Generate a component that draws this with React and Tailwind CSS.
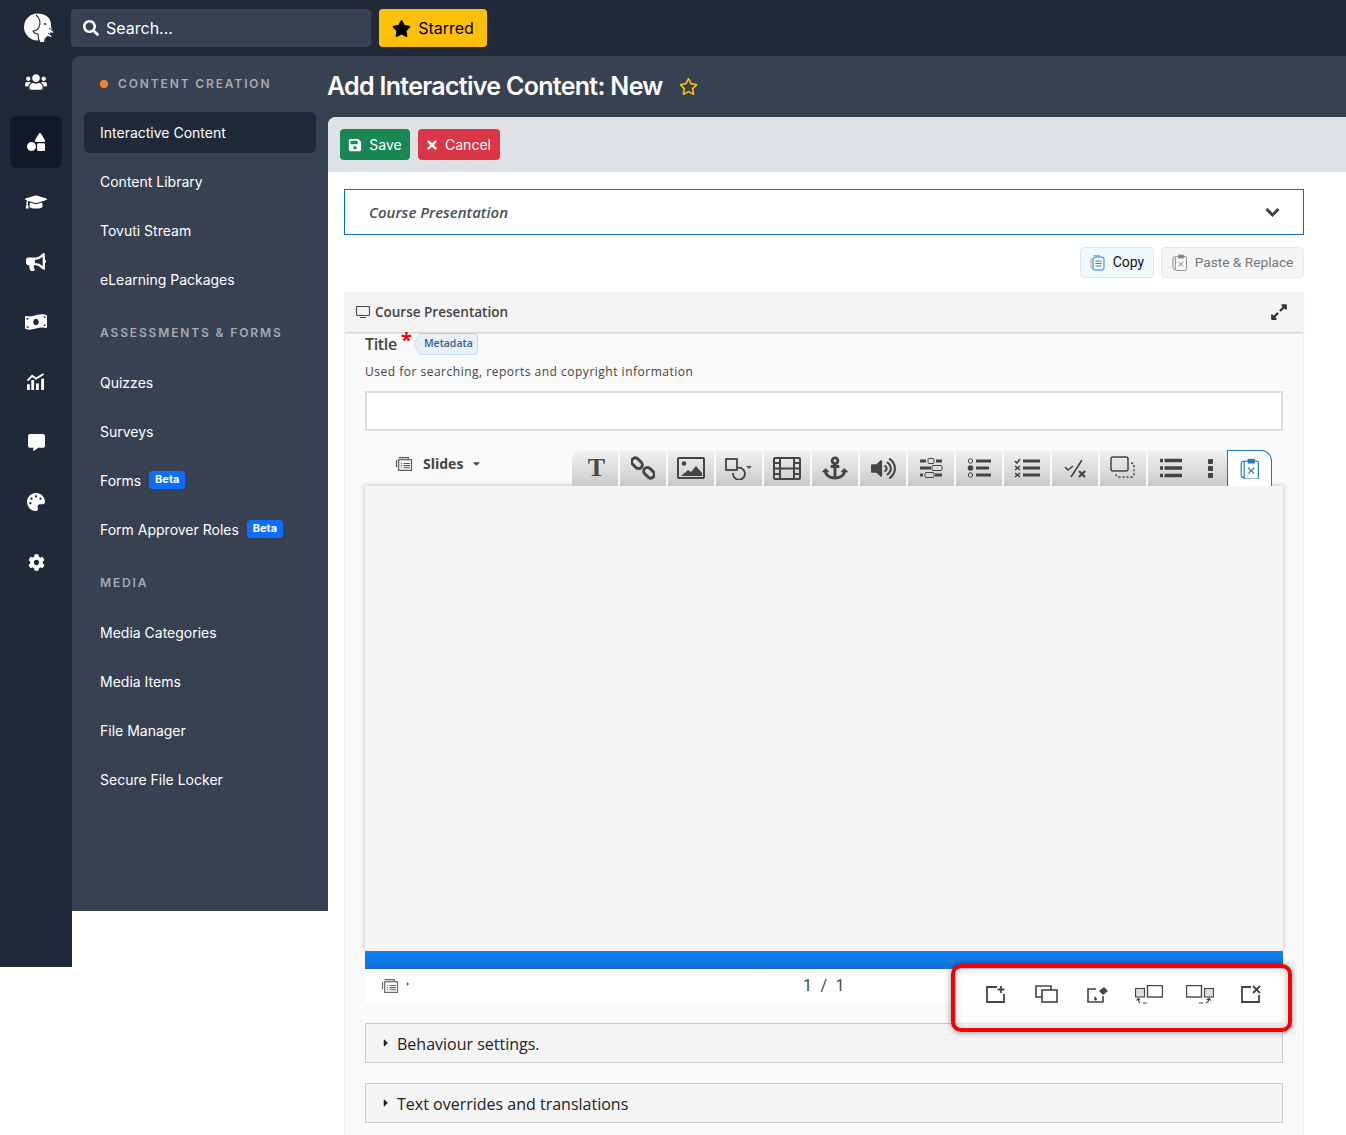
import React from 'react';
import {
  FaUsers, FaShapes, FaGraduationCap, FaBullhorn, FaMoneyBillWave, FaCommentAlt, FaPalette, FaCog,
  FaSearch, FaStar, FaRegStar, FaSave, FaTimes, FaChevronDown, FaExpandAlt, FaAnchor, FaVolumeUp, FaCaretDown, FaCaretRight,
} from 'react-icons/fa';

const ElephantLogo = () => (
  <svg width="32" height="30" viewBox="0 0 32 30">
    <circle cx="13.5" cy="14" r="13.5" fill="#fff" />
    <path d="M16 1c7 0 11 5 11 11 0 3 1 5 3 7-2 1-3 1-4 0 0 2 1 4 2 5-3 0-5-2-6-5l-2 10h-4l1-10-3-3c3-1 5-5 4-9-.4-2-1-4-2-6z" fill="#fff" />
    <path d="M12 2c4 3 5 8 3 12-1 2-3 4-6 4 1 2 3 3 5 3l1 8" fill="none" stroke="#212a39" strokeWidth="1.1" />
    <path d="M24 20l4 3M25 15l5 4" stroke="#212a39" strokeWidth="1" />
    <circle cx="21" cy="11" r="1" fill="#212a39" />
  </svg>
);

const ChartIcon = () => (
  <svg width="20" height="17" viewBox="0 0 20 18" fill="#fff" className="-mt-[2px]">
    <path d="M1 8l5-5 4 3 8-5" fill="none" stroke="#fff" strokeWidth="2" />
    <rect x="0.5" y="12" width="3" height="6" />
    <rect x="5" y="7.5" width="3" height="10.5" />
    <rect x="10" y="11" width="3" height="7" />
    <rect x="15.5" y="6" width="3" height="12" />
  </svg>
);

const railIcons = [
  <FaUsers size={22} />,
  <FaShapes size={18} />,
  <FaGraduationCap size={22} />,
  <FaBullhorn size={20} />,
  <FaMoneyBillWave size={22} />,
  <ChartIcon />,
  <FaCommentAlt size={17} />,
  <FaPalette size={18} />,
  <FaCog size={17} />,
];

const Ico = ({ w = 28, h = 26, vb, children, color = '#444' }) => (
  <svg width={w} height={h} viewBox={vb || `0 0 ${w} ${h}`} fill="none" stroke={color} strokeWidth="2">
    {children}
  </svg>
);

const toolIcons = [
  <span className="font-['Liberation_Serif',serif] font-bold text-[26px] leading-none text-[#4a4a4a] ml-[3px]">T</span>,
  <Ico w={24} h={24}>
    <rect x="0" y="3.5" width="12" height="7.5" rx="3.7" transform="rotate(45 6 7.2)" strokeWidth="3" />
    <rect x="12" y="13" width="12" height="7.5" rx="3.7" transform="rotate(45 18 16.8)" strokeWidth="3" />
  </Ico>,
  <Ico w={28} h={24}>
    <rect x="1" y="2" width="26" height="20" rx="1" />
    <circle cx="7" cy="7.5" r="2.3" fill="#444" stroke="none" />
    <path d="M4 20l7-6 3 2 5-6 6 7v3z" fill="#444" stroke="none" />
  </Ico>,
  <Ico w={28} h={24}>
    <rect x="1" y="3" width="11" height="11" strokeWidth="1.8" />
    <path d="M12 12a6 6 0 1 1-4 5" strokeWidth="1.8" />
    <path d="M21 10h6l-3 3z" fill="#555" stroke="none" />
  </Ico>,
  <Ico w={28} h={24}>
    <rect x="1" y="2" width="26" height="21" rx="1" />
    <path d="M7 2v21M21 2v21M7 12.5h14M1 7h6M1 12.5h6M1 18h6M21 7h6M21 12.5h6M21 18h6" />
  </Ico>,
  <FaAnchor size={26} color="#444" />,
  <FaVolumeUp size={25} color="#444" />,
  <Ico w={24} h={22} color="#444">
    <g strokeWidth="3">
      <path d="M1 4h6M17 4h6M1 11h11M1 18h3M16 18h7" />
    </g>
    <g strokeWidth="1">
      <rect x="9" y="1.5" width="6" height="5" rx="1" />
      <rect x="13" y="8.5" width="10" height="5" rx="1" />
      <rect x="6" y="15.5" width="9" height="5" rx="1" />
    </g>
  </Ico>,
  <Ico w={24} h={22}>
    <circle cx="3.5" cy="4" r="2.2" strokeWidth="1" />
    <circle cx="3.5" cy="11" r="2.8" fill="#444" stroke="none" />
    <circle cx="3.5" cy="18" r="2.2" strokeWidth="1" />
    <path d="M9 4h15M9 11h13M9 18h15" strokeWidth="3" />
  </Ico>,
  <Ico w={26} h={20}>
    <path d="M1 3l2 2 3-4" strokeWidth="1.6" />
    <path d="M1 8l5 4M6 8l-5 4M1 15l5 4M6 15l-5 4" strokeWidth="1.6" />
    <path d="M9 3h17M9 10h17M9 17h17" strokeWidth="3" />
  </Ico>,
  <Ico w={22} h={20}>
    <path d="M1 9l3 3 5-4M18 2L7 19" strokeWidth="1.6" />
    <path d="M15 13l6 6M21 13l-6 6" strokeWidth="2.2" />
  </Ico>,
  <Ico w={26} h={24}>
    <rect x="1" y="1" width="17" height="14" rx="2" strokeWidth="1.5" />
    <path d="M21 7c2 0 3 1 3 3v8c0 2-1 3-3 3H9c-2 0-3-1-3-3" strokeWidth="1.5" strokeDasharray="2 2" />
  </Ico>,
  <Ico w={22} h={20}>
    <path d="M0 2.5h3M4.5 2.5h17.5M0 10h3M4.5 10h17.5M0 17.5h3M4.5 17.5h17.5" strokeWidth="3.4" />
  </Ico>,
];

// clipboard with x, used for paste
const ClipboardX = ({ color = '#888', size = 16 }) => (
  <svg width={size} height={size * 1.15} viewBox="0 0 16 18" fill="none" stroke={color} strokeWidth="1">
    <path d="M3.5 2.5C2 2.5 1 3.5 1 5v9c0 1.5 1 2.5 2.5 2.5" />
    <rect x="3.5" y="2.5" width="12" height="15" rx="1.5" />
    <rect x="7" y="1" width="5" height="3" fill={color} />
    <path d="M7 8l5 5M12 8l-5 5" />
  </svg>
);

const CopyIcon = () => (
  <svg width="15" height="17" viewBox="0 0 15 17" fill="none" strokeWidth="1">
    <path d="M3 1.5h7M1 4v9c0 1 1 2 2 2" stroke="#d9a0a0" />
    <rect x="3" y="3" width="11" height="13" rx="2" stroke="#2b7cc0" />
    <path d="M5.5 7h6M5.5 9.5h6M5.5 12h6" stroke="#2b7cc0" />
  </svg>
);

const SlidesIcon = ({ color = '#555' }) => (
  <svg width="16" height="14" viewBox="0 0 15 13" fill="none" stroke={color} strokeWidth="1.1">
    <path d="M2.5 .5h9v2M.5 2.5v7" />
    <rect x="2.5" y="2.5" width="12" height="10" fill="#fff" />
    <path d="M4.5 6h1M7 6h6M4.5 8h1M7 8h6M4.5 10h1M7 10h6" />
  </svg>
);

const slideActions = [
  <svg width="20" height="18" viewBox="0 0 20 18" fill="none" stroke="#444" strokeWidth="1.8">
    <path d="M11 2H1v15h17V9M15 1v7M11.5 4.5h7" />
  </svg>,
  <svg width="24" height="18" viewBox="0 0 24 18" fill="none" stroke="#444" strokeWidth="1.6">
    <path d="M7 12H1V1h15v4" />
    <rect x="7" y="5" width="15" height="12" />
  </svg>,
  <svg width="22" height="18" viewBox="0 0 22 18" fill="none" stroke="#444" strokeWidth="1.6">
    <path d="M9 4H1v13h15V11" />
    <path d="M12 6l5-4 4 4-5 4z" fill="#444" stroke="none" />
    <path d="M8 11c1 2 2 2 2 3a1.5 1.5 0 0 1-3 0c0-1 1-2 1-3z" fill="#444" stroke="none" />
  </svg>,
  <svg width="28" height="19" viewBox="0 0 28 19" fill="none" stroke="#444" strokeWidth="1.1">
    <rect x=".5" y="3.5" width="9" height="8.5" fill="#ddd" />
    <rect x="12.5" y=".5" width="15" height="11.5" strokeWidth="1.4" />
    <path d="M5 18c-1-1-2-2-2-4M1.5 15.5L3 13.5l2 1.5M8 18h4" />
  </svg>,
  <svg width="28" height="19" viewBox="0 0 28 19" fill="none" stroke="#444" strokeWidth="1.1">
    <rect x=".5" y=".5" width="15" height="11.5" strokeWidth="1.4" />
    <rect x="18.5" y="3.5" width="9" height="8.5" fill="#ddd" />
    <path d="M23 14c0 2-1 3-3 4M20.5 15l2.5-1.5 2 2M13 18h4" />
  </svg>,
  <svg width="20" height="18" viewBox="0 0 20 18" fill="none" stroke="#444" strokeWidth="1.8">
    <path d="M10 2H1v15h17V10M12 1l7 7M19 1l-7 7" />
  </svg>,
];

const NavItem = ({ children, active }) => (
  <div className={`h-[41px] flex items-center px-4 rounded-md text-[14px] text-white ${active ? 'bg-[#202938]' : ''}`}>
    {children}
  </div>
);

const Beta = () => (
  <span className="ml-2 -mt-[2px] inline-flex items-center justify-center h-[18px] w-9 rounded bg-[#0d6efd] text-[11px] font-bold text-white">Beta</span>
);

const SectionHead = ({ children, className = '' }) => (
  <div className={`pl-4 text-[12px] font-semibold tracking-[0.155em] text-[#a3a9b3] ${className}`}>{children}</div>
);

const Accordion = ({ label, className = '' }) => (
  <div className={`h-10 bg-[#f4f4f4] border border-[#ccc] flex items-center pl-[14px] pt-[2px] text-[16px] text-[#222] ${className}`}>
    <FaCaretRight size={12} className="mr-[5px] -mt-[2px] text-[#222]" />
    {label}
  </div>
);

export default function App() {
  return (
    <div className="relative w-[1346px] h-[1135px] overflow-hidden bg-white font-['Inter',sans-serif]">
      {/* top bar */}
      <div className="h-14 bg-[#202938] flex items-center">
        <div className="w-[71px] flex justify-center pl-[8px]"><ElephantLogo /></div>
        <div className="w-[300px] h-[38px] rounded bg-[#384152] flex items-center pl-3 text-white text-[16px]">
          <FaSearch size={16} className="mr-[7px]" /> Search...
        </div>
        <div className="ml-2 w-[108px] h-[38px] rounded bg-[#ffc107] flex items-center justify-center gap-[7px] text-black text-[16px]">
          <FaStar size={19} /> Starred
        </div>
      </div>

      <div className="flex items-start">
        {/* icon rail */}
        <div className="w-[72px] h-[911px] bg-[#202938] flex flex-col gap-2 pl-[10px] shrink-0">
          {railIcons.map((ic, i) => (
            <div key={i} className={`w-[52px] h-[52px] rounded-md flex items-center justify-center text-white ${i === 1 ? 'bg-[#111827]' : ''}`}>
              {ic}
            </div>
          ))}
        </div>

        {/* side menu */}
        <div className="w-[256px] bg-[#202938] shrink-0">
          <div className="h-[855px] bg-[#384152] rounded-tl-lg px-3 pt-[20px]">
            <div className="pl-4 h-4 flex items-center text-[12px] font-semibold tracking-[0.155em] text-[#a3a9b3]">
              <span className="w-2 h-2 rounded-full bg-[#f5862e] mr-[10px]" />CONTENT CREATION
            </div>
            <div className="mt-[20px] flex flex-col gap-2">
              <NavItem active>Interactive Content</NavItem>
              <NavItem>Content Library</NavItem>
              <NavItem>Tovuti Stream</NavItem>
              <NavItem>eLearning Packages</NavItem>
            </div>
            <SectionHead className="mt-[25px] h-[16px] leading-[16px]">ASSESSMENTS &amp; FORMS</SectionHead>
            <div className="mt-[21px] flex flex-col gap-2">
              <NavItem>Quizzes</NavItem>
              <NavItem>Surveys</NavItem>
              <NavItem>Forms<Beta /></NavItem>
              <NavItem>Form Approver Roles<Beta /></NavItem>
            </div>
            <SectionHead className="mt-[25px] h-[16px] leading-[16px]">MEDIA</SectionHead>
            <div className="mt-[21px] flex flex-col gap-2">
              <NavItem>Media Categories</NavItem>
              <NavItem>Media Items</NavItem>
              <NavItem>File Manager</NavItem>
              <NavItem>Secure File Locker</NavItem>
            </div>
          </div>
        </div>

        {/* main */}
        <div className="w-[1018px] shrink-0 bg-[#384152]">
          <div className="h-[61px] flex items-center text-white">
            <h1 className="-ml-[1px] text-[25px] font-semibold tracking-[-0.028em]">Add Interactive Content: New</h1>
            <FaRegStar size={19} className="ml-[16px] text-[#ffc107]" />
          </div>
          <div className="bg-white rounded-tl-lg h-[1018px]">
            <div className="h-[55px] bg-[#dee2e6] rounded-tl-lg flex items-center gap-2 pl-3">
              <button className="h-[31px] w-[70px] rounded bg-[#198754] text-white text-[14px] flex items-center justify-center gap-[7px]">
                <FaSave size={14} /> Save
              </button>
              <button className="h-[31px] w-[82px] rounded bg-[#dc3545] text-white text-[14px] flex items-center justify-center gap-[6px] pr-[2px]">
                <FaTimes size={14} /> Cancel
              </button>
            </div>

            <div className="ml-4 w-[960px] pt-[17px] font-['Open_Sans',sans-serif]">
              <div className="h-[46px] border border-[#0a6ebd] flex items-center justify-between pl-6 pr-[23px] text-[15px] italic font-semibold text-[#4a4f57]">
                Course Presentation
                <FaChevronDown size={15} className="text-[#3d4450] stroke-[30px]" />
              </div>

              <div className="mt-3 flex justify-end gap-[7px] font-['Roboto',sans-serif] text-[14px]">
                <div className="h-[31px] w-[74px] rounded border border-[#d5e8f2] bg-[#f1f9fd] text-[#111] flex items-center justify-center gap-[8px]">
                  <CopyIcon /> Copy
                </div>
                <div className="h-[31px] w-[143px] rounded border border-[#eaeaea] bg-[#f5f5f5] text-[#777] flex items-center justify-center gap-[8px]">
                  <ClipboardX size={15} /> <span className="text-[13.7px]">Paste &amp; Replace</span>
                </div>
              </div>

              <div className="mt-[14px] h-10 bg-[#f4f4f4] shadow-[0_2px_2px_-1px_rgba(0,0,0,0.2)] flex items-center justify-between pl-3 pr-[16px] text-[13.5px] font-semibold text-[#444] relative">
                <span className="flex items-center gap-[5px]">
                  <svg width="14" height="12" viewBox="0 0 14 12" fill="none" stroke="#444" strokeWidth="1.1">
                    <rect x=".5" y=".5" width="13" height="9" rx="1" />
                    <path d="M4 11.5h6" />
                  </svg>
                  Course Presentation
                </span>
                <FaExpandAlt size={18} className="text-[#333]" />
              </div>

              <div className="bg-[#fafafa] border-x border-[#eee] px-5 h-[900px]">
                <div className="h-[24px] flex items-center">
                  <span className="text-[16px] font-semibold text-[#444] tracking-[-0.02em]">Title</span>
                  <span className="ml-1 -mt-[8px] text-[20px] leading-none font-bold text-[#e00]">*</span>
                  <svg width="7" height="22" viewBox="0 0 7 22" className="ml-[1px] -mt-[1px]">
                    <path d="M7 .5L.8 11 7 21.5" fill="#e8f0f8" stroke="#c9dced" />
                  </svg>
                  <span className="-mt-[1px] h-[22px] w-[58px] rounded-r border border-l-0 border-[#c9dced] bg-[#e8f0f8] text-[10.5px] font-semibold text-[#3d5f8a] flex items-center justify-center">Metadata</span>
                </div>
                <div className="mt-[7px] text-[12px] leading-[18px] tracking-[0.042em] text-[#444]">Used for searching, reports and copyright information</div>
                <div className="mt-[10px] h-10 bg-white border-2 border-[#ddd]" />

                <div className="mt-[19px] h-9 flex">
                  <div className="w-[207px] pl-[31px] flex items-start pt-[3px] text-[14px] font-bold text-[#444]">
                    <span className="mt-[4px]"><SlidesIcon /></span>
                    <span className="ml-[11px]">Slides</span>
                    <FaCaretDown size={11} className="ml-[8px] mt-[5px]" />
                  </div>
                  <div className="flex h-9 w-[700px] relative z-10">
                    <div className="flex rounded-tl-[11px] overflow-hidden">
                      {toolIcons.map((ic, i) => (
                        <div key={i} className="w-[48px] h-9 bg-linear-to-b from-[#f2f2f2] to-[#cacaca] border-r-2 border-[#fafafa] flex items-center justify-center">
                          {ic}
                        </div>
                      ))}
                    </div>
                    <div className="w-[33px] -ml-[2px] h-9 bg-linear-to-b from-[#f2f2f2] to-[#cacaca] flex flex-col items-center justify-center gap-[2px]">
                      <span className="w-[5px] h-[5px] bg-[#444] rounded-[1px]" />
                      <span className="w-[5px] h-[5px] bg-[#444] rounded-[1px]" />
                      <span className="w-[5px] h-[5px] bg-[#444] rounded-[1px]" />
                    </div>
                    <div className="w-[45px] h-9 bg-white border border-b-0 border-[#1f78b4] rounded-tr-[11px] flex items-center justify-center">
                      <ClipboardX color="#2b7cc0" size={19} />
                    </div>
                  </div>
                </div>

                <div className="h-[465px] bg-[#f5f5f5] shadow-[0_0_6px_rgba(0,0,0,0.25)]" />
                <div className="h-[18px] bg-linear-to-b from-[#0a84f5] to-[#1570d8]" />
                <div className="h-[34px] bg-white relative flex items-center pl-[17px]">
                  <SlidesIcon color="#666" />
                  <FaCaretRight size={6} className="ml-[7px] -mt-[4px] text-[#555]" />
                  <span className="absolute left-[438px] top-[5px] font-['Roboto',sans-serif] text-[16px] tracking-[0.14em] text-[#444]">1 / 1</span>
                </div>
                <Accordion label="Behaviour settings." className="mt-5" />
                <Accordion label="Text overrides and translations" className="mt-5" />
              </div>
            </div>
          </div>
        </div>
      </div>

      {/* red annotation drawn over the slide controls */}
      <div className="absolute left-[951px] top-[964px] w-[341px] h-[68px] rounded-[10px] border-4 border-[#f00000] bg-white/70 shadow-[0_0_6px_rgba(0,0,0,0.45),inset_0_0_8px_rgba(0,0,0,0.25)] flex items-start pt-[17px] pl-[15px]">
        {slideActions.map((ic, i) => (
          <div key={i} className="w-[51px] flex justify-center">{ic}</div>
        ))}
      </div>
    </div>
  );
}
